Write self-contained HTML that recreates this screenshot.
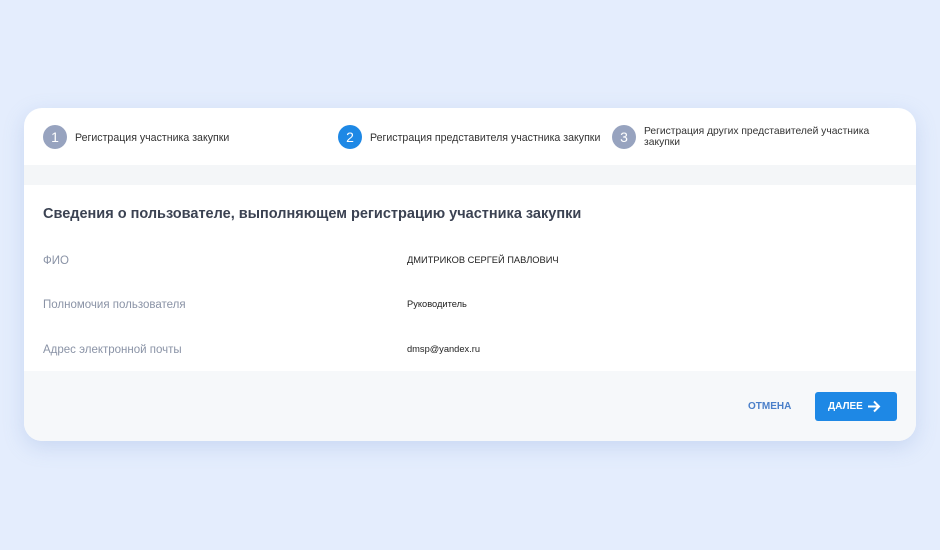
<!DOCTYPE html><html><head><meta charset="utf-8"><style>
body{margin:0;width:940px;height:550px;background:#e4edfd;font-family:"Liberation Sans",sans-serif;position:relative;overflow:hidden}
.card{position:absolute;left:24px;top:108px;width:892px;height:333px;background:#fff;border-radius:18px;overflow:hidden;box-shadow:0 6px 20px rgba(120,150,210,.25)}
.band{position:absolute;left:0;top:57px;width:892px;height:20px;background:#f4f6f8}
.foot{position:absolute;left:0;top:263px;width:892px;height:70px;background:#f6f8fa}
.c{position:absolute;width:24px;height:24px;border-radius:50%;color:#fff;font-size:14px;text-align:center;line-height:24px;top:17px}
.s{position:absolute;font-size:10.6px;color:#333;top:25px;line-height:11px}
h1{position:absolute;left:19px;top:98px;margin:0;font-size:14.5px;font-weight:bold;color:#3b4252}
.l{position:absolute;left:19px;font-size:11.5px;color:#8a93a6}
.v{position:absolute;left:383px;font-size:9.3px;color:#222}
.btn{position:absolute;left:791px;top:284px;width:82px;height:29px;background:#1e88e5;border-radius:3px;color:#fff;font-size:10px;font-weight:bold;line-height:30px}
</style></head><body>
<div class="card">
<div class="band"></div><div class="foot"></div>
<div class="c" style="left:19px;background:#97a3bf">1</div><div class="s" style="left:51px">Регистрация участника закупки</div>
<div class="c" style="left:314px;background:#1e88e5">2</div><div class="s" style="left:346px">Регистрация представителя участника закупки</div>
<div class="c" style="left:588px;background:#97a3bf">3</div><div class="s" style="left:620px;top:18px;font-size:10.3px">Регистрация других представителей участника<br>закупки</div>
<h1>Сведения о пользователе, выполняющем регистрацию участника закупки</h1>
<div class="l" style="top:147px">ФИО</div><div class="v" style="top:147px">ДМИТРИКОВ СЕРГЕЙ ПАВЛОВИЧ</div>
<div class="l" style="top:191px">Полномочия пользователя</div><div class="v" style="top:191px">Руководитель</div>
<div class="l" style="top:236px">Адрес электронной почты</div><div class="v" style="top:236px">dmsp@yandex.ru</div>
<div style="position:absolute;left:724px;top:293px;font-size:10px;font-weight:bold;color:#4a7fc9">ОТМЕНА</div>
<div class="btn"><span style="margin-left:13px">ДАЛЕЕ</span><svg style="position:absolute;left:52px;top:8px" width="14" height="13" viewBox="0 0 14 13"><path d="M1 6.5H12M7 1.5l5 5-5 5" stroke="#fff" stroke-width="2" fill="none"/></svg></div>
</div>
</body></html>
